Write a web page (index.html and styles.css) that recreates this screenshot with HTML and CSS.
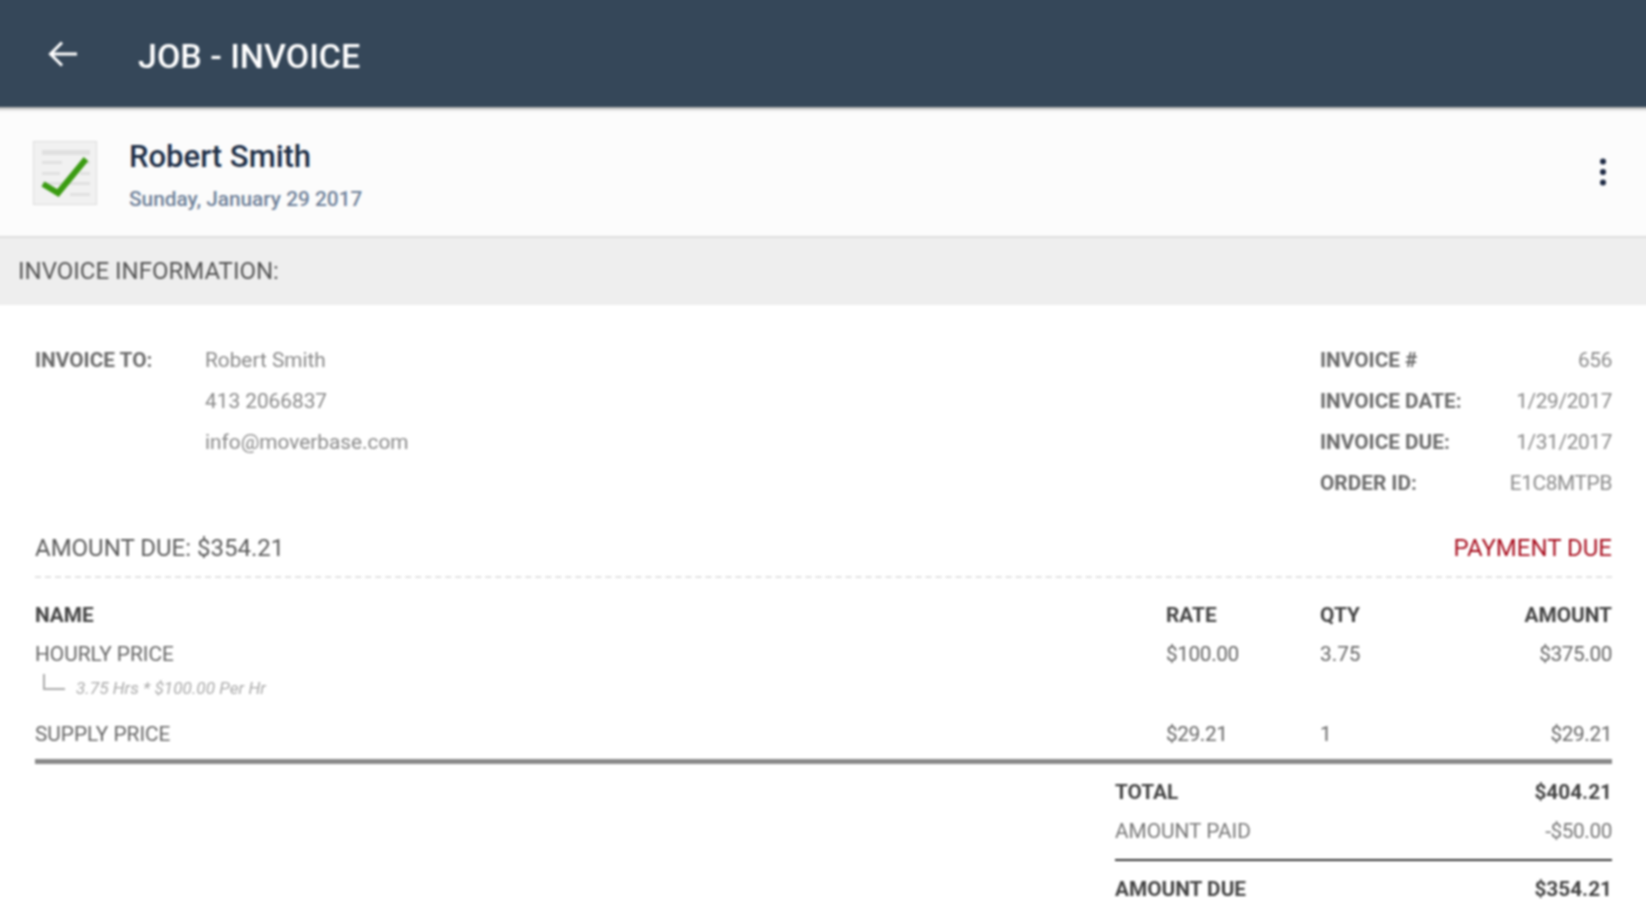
FILE: index.html
```html
<!DOCTYPE html>
<html lang="en">
<head>
    <meta charset="UTF-8">
    <meta name="viewport" content="width=device-width, initial-scale=1.0">
    <title>Job - Invoice</title>
    <link rel="stylesheet" href="styles.css">
</head>
<body>
    <div class="page">
        <header class="topbar">
            <svg class="back" viewBox="0 0 30 30" width="30" height="30">
                <path d="M29 15H3M14 3.5L2.5 15 14 26.5" fill="none" stroke="#fff" stroke-width="3"/>
            </svg>
            <h1 class="title">JOB - INVOICE</h1>
        </header>

        <section class="customer">
            <svg class="doc" viewBox="0 0 64 64" width="64" height="64">
                <rect x="0.5" y="0.5" width="63" height="63" fill="#f1f1f1" stroke="#dcdcdc"/>
                <path d="M9 9H57V14H9zM9 20H29V23H9zM9 31H27V34H9zM47 20H57V23H47zM47 31H57V34H47zM9 41H57V44H9zM37 52H57V55H37z" fill="#e0e0e0"/>
                <path d="M10 43L25 52 53 18" fill="none" stroke="#3b9c12" stroke-width="6"/>
            </svg>
            <div class="customer-text">
                <div class="customer-name">Robert Smith</div>
                <div class="customer-date">Sunday, January 29 2017</div>
            </div>
            <svg class="more" viewBox="0 0 8 28" width="8" height="28">
                <circle cx="4" cy="3.5" r="3"/>
                <circle cx="4" cy="14" r="3"/>
                <circle cx="4" cy="24.5" r="3"/>
            </svg>
        </section>

        <div class="section-bar">INVOICE INFORMATION:</div>

        <main class="invoice">
            <div class="info">
                <div class="info-to">
                    <div class="info-label">INVOICE TO:</div>
                    <div class="info-lines">
                        <div class="info-line">Robert Smith</div>
                        <div class="info-line">413 2066837</div>
                        <div class="info-line">info@moverbase.com</div>
                    </div>
                </div>
                <div class="info-meta">
                    <div class="info-label">INVOICE #</div><div class="info-value">656</div>
                    <div class="info-label">INVOICE DATE:</div><div class="info-value">1/29/2017</div>
                    <div class="info-label">INVOICE DUE:</div><div class="info-value">1/31/2017</div>
                    <div class="info-label">ORDER ID:</div><div class="info-value">E1C8MTPB</div>
                </div>
            </div>

            <div class="due-row">
                <span>AMOUNT DUE: $354.21</span>
                <span class="due-status">PAYMENT DUE</span>
            </div>

            <div class="items">
                <div class="item item-head">
                    <span>NAME</span><span>RATE</span><span>QTY</span><span class="num">AMOUNT</span>
                </div>
                <div class="item">
                    <span>HOURLY PRICE</span><span class="money">$100.00</span><span>3.75</span><span class="num money">$375.00</span>
                </div>
                <div class="item-note">
                    <span class="elbow"></span>
                    <span>3.75 Hrs * $100.00 Per Hr</span>
                </div>
                <div class="item item-last">
                    <span>SUPPLY PRICE</span><span class="money">$29.21</span><span>1</span><span class="num money">$29.21</span>
                </div>
            </div>

            <div class="totals">
                <div class="total-row total-strong"><span>TOTAL</span><span>$404.21</span></div>
                <div class="total-row total-paid"><span>AMOUNT PAID</span><span class="money">-$50.00</span></div>
                <div class="total-row total-strong total-due"><span>AMOUNT DUE</span><span>$354.21</span></div>
            </div>
        </main>
    </div>
</body>
</html>
```

FILE: styles.css
```css
html, body {
    margin: 0;
    height: 900px;
    overflow: hidden;
    background: #fff;
}

/* the page bleeds 4px past the window so the blur doesn't fade the bar edges */
.page {
    margin: -4px -4px 0;
    font-family: Roboto, "Liberation Sans", sans-serif;
    color: #6f6f6f;
    filter: blur(0.8px);
}

.topbar {
    height: 111px;
    padding: 4px 0 0 52px;
    box-sizing: border-box;
    background: #354759;
    box-shadow: 0 2px 3px rgba(0, 0, 0, 0.35);
    display: flex;
    align-items: center;
    position: relative;
}

.back {
    margin-right: 60px;
}

.title {
    margin: 0;
    padding-top: 4px;
    font-size: 34px;
    font-weight: 500;
    color: #fff;
}

.customer {
    height: 131px;
    background: #fcfcfc;
    border-bottom: 2px solid #dedede;
    box-sizing: border-box;
    display: flex;
    align-items: center;
    padding: 0 43px 0 37px;
}

.doc {
    margin-top: 2px;
}

.customer-text {
    flex: 1;
    margin-left: 32px;
    padding-top: 6px;
}

.customer-name {
    font-size: 31px;
    font-weight: 500;
    color: #1f3048;
}

.customer-date {
    font-size: 20.8px;
    font-weight: 500;
    color: #6f8199;
    margin-top: 12px;
}

.more {
    fill: #1e2a44;
}

.section-bar {
    height: 67px;
    line-height: 67px;
    background: #eee;
    padding-left: 22px;
    font-size: 24px;
    color: #555;
}

.invoice {
    padding: 35px 38px 0 39px;
}

.info {
    display: flex;
    justify-content: space-between;
    font-size: 20.8px;
    line-height: 41px;
}

.info-to {
    display: flex;
}

.info-label {
    font-weight: 700;
    color: #6a6a6a;
}

.info-to .info-label {
    width: 170px;
}

.info-value {
    text-align: right;
    color: #8a8a8a;
    letter-spacing: -0.35px;
}

.info-line {
    color: #8a8a8a;
}

.info-meta {
    width: 292px;
    display: grid;
    grid-template-columns: 1fr auto;
}

.due-row {
    display: flex;
    justify-content: space-between;
    margin-top: 24px;
    padding-bottom: 8px;
    line-height: 40px;
    font-size: 24px;
    color: #5c5c5c;
    border-bottom: 2px dashed #e2e2e2;
}

.due-status {
    color: #a80f1f;
}

.items {
    font-size: 20.8px;
    color: #666;
    border-bottom: 5px solid #8a8a8a;
    padding-top: 18px;
}

.item {
    display: grid;
    grid-template-columns: 1131px 154px 1fr auto;
    height: 39px;
    line-height: 39px;
}

.item-head {
    font-weight: 700;
    color: #444;
}

.item .num {
    text-align: right;
}

.money {
    letter-spacing: -0.4px;
}

.item-note {
    display: flex;
    align-items: center;
    height: 27px;
    font-size: 17.2px;
    font-style: italic;
    color: #aaa;
}

.elbow {
    width: 20px;
    height: 14px;
    border-left: 2px solid #aaa;
    border-bottom: 2px solid #aaa;
    margin: -11px 11px 0 8px;
}

.item-last {
    margin-top: 14px;
    height: 44px;
}

.totals {
    margin-left: 1080px;
    font-size: 20.8px;
    padding-top: 9px;
}

.total-row {
    display: flex;
    justify-content: space-between;
    height: 39px;
    line-height: 39px;
}

.total-strong {
    font-weight: 700;
    color: #444;
}

.total-paid {
    color: #777;
}

.total-due {
    border-top: 2px solid #333;
    margin-top: 8px;
    padding-top: 9px;
}
```
